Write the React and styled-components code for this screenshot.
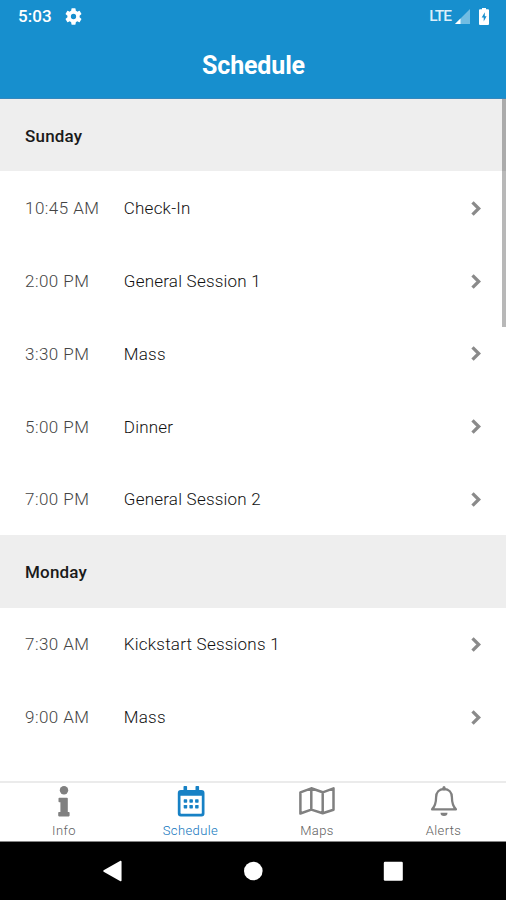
import React from "react";
import styled, { createGlobalStyle } from "styled-components";

const GlobalStyle = createGlobalStyle`
  * { box-sizing: border-box; }
  body { margin: 0; background: #fff; font-family: Roboto, sans-serif; }
  svg { display: block; flex: none; }
`;

const Screen = styled.div`
  width: 506px;
  height: 900px;
  display: flex;
  flex-direction: column;
  overflow: hidden;
  background: #fff;
`;

const Header = styled.header`
  height: 99px;
  flex: none;
  background: #178fce;
  border-bottom: 1px solid #3487bd;
  color: #fff;
`;

const StatusBar = styled.div`
  height: 32px;
  padding: 0 17px 0 18px;
  display: flex;
  align-items: center;
  justify-content: space-between;
`;

const StatusGroup = styled.div`
  display: flex;
  align-items: center;
  gap: ${(p) => p.$gap}px;
`;

const Clock = styled.span`
  font-size: 17px;
  line-height: 20px;
  font-weight: 500;
  letter-spacing: 0.1px;
`;

const Network = styled.span`
  font-size: 15.5px;
  line-height: 20px;
  font-weight: 500;
  letter-spacing: -1px;
  color: #dceffa;
`;

const Title = styled.h1`
  margin: 0;
  height: 67px;
  padding-left: 1px;
  text-align: center;
  font-size: 25px;
  line-height: 68px;
  font-weight: 700;
  letter-spacing: -0.15px;
`;

const Body = styled.main`
  position: relative;
  height: 682px;
  flex: none;
  overflow: hidden;
`;

const ScrollThumb = styled.div`
  position: absolute;
  top: 0;
  right: 0;
  width: 4.5px;
  height: 228px;
  background: rgba(0, 0, 0, 0.28);
`;

const DayHeading = styled.h2`
  margin: 0;
  height: 72.4px;
  padding-left: 25px;
  background: #eee;
  color: #1a1a1a;
  font-size: 17px;
  line-height: 74px;
  font-weight: 500;
  letter-spacing: 0.2px;
`;

const EventRow = styled.div`
  height: 72.75px;
  padding: 1px 25px 0 25px;
  display: grid;
  grid-template-columns: 98.8px 1fr auto;
  align-items: center;
  font-size: 17px;
  line-height: 22px;
  font-weight: 300;
`;

const Time = styled.span`
  color: #444;
  letter-spacing: 0.45px;
`;

const EventName = styled.span`
  color: #111;
  letter-spacing: 0.22px;
`;

const TabBar = styled.nav`
  height: 61px;
  flex: none;
  display: grid;
  grid-template-columns: repeat(4, 1fr);
  border-top: 2px solid #ebebeb;
  border-bottom: 1px solid #858585;
`;

const Tab = styled.div`
  display: flex;
  flex-direction: column;
  align-items: center;
  padding: 2px 0 0 1.5px;
  gap: 6px;
  color: ${(p) => (p.$active ? "#1781c5" : "#808080")};
`;

const TabLabel = styled.span`
  font-size: 13px;
  line-height: 16px;
  font-weight: 300;
  letter-spacing: 0.4px;
  color: ${(p) => (p.$active ? "#0f75bd" : "#606060")};
`;

const SystemNav = styled.footer`
  height: 58px;
  flex: none;
  padding-bottom: 1px;
  display: flex;
  align-items: center;
  justify-content: center;
  gap: 120px;
  background: #000;
`;

const GearIcon = () => (
  <svg width="17" height="17" viewBox="2 2 20 20">
    <path
      fill="#fff"
      d="M19.14 12.94c.04-.3.06-.61.06-.94 0-.32-.02-.64-.07-.94l2.03-1.58a.49.49 0 0 0 .12-.61l-1.92-3.32a.49.49 0 0 0-.59-.22l-2.39.96a7.03 7.03 0 0 0-1.62-.94l-.36-2.54A.48.48 0 0 0 13.92 2.4h-3.84a.47.47 0 0 0-.47.41l-.36 2.54c-.59.24-1.13.57-1.62.94l-2.39-.96a.47.47 0 0 0-.59.22L2.74 8.87a.47.47 0 0 0 .12.61l2.03 1.58a7 7 0 0 0-.02 1.88l-2.03 1.58a.49.49 0 0 0-.12.61l1.92 3.32c.12.22.37.29.59.22l2.39-.96c.5.38 1.03.7 1.62.94l.36 2.54c.05.24.24.41.48.41h3.84c.24 0 .44-.17.47-.41l.36-2.54a6.7 6.7 0 0 0 1.62-.94l2.39.96c.22.08.47 0 .59-.22l1.92-3.32a.47.47 0 0 0-.12-.61zM12 15.1a3.1 3.1 0 1 1 0-6.2 3.1 3.1 0 0 1 0 6.2z"
    />
  </svg>
);

const SignalIcon = () => (
  <svg width="15" height="15" viewBox="0 0 15 15">
    <path d="M15 0V15H0z" fill="#71bce2" />
    <path d="M5.5 9.5V15H0z" fill="#fff" />
  </svg>
);

const BatteryIcon = () => (
  <svg width="10" height="17" viewBox="0 0 10 17">
    <path d="M3 0h4v1.2h2a1 1 0 0 1 1 1V16a1 1 0 0 1-1 1H1a1 1 0 0 1-1-1V2.2a1 1 0 0 1 1-1h2z" fill="#fff" />
    <path d="M5.8 4.3 2.7 9.5h2v4.1l2.900-5.400H5.8z" fill="#178fce" />
  </svg>
);

const Chevron = () => (
  <svg width="10" height="15" viewBox="0 0 10 15">
    <path d="M1.5 1.4 7.7 7.5 1.5 13.6" fill="none" stroke="#8a8a8a" strokeWidth="3.3" />
  </svg>
);

const InfoIcon = () => (
  <svg width="36" height="32" viewBox="0 0 36 32">
    <g fill="currentColor">
      <circle cx="18" cy="5.3" r="4.2" />
      <path d="M13.3 12.7h7.7a.8.8 0 0 1 .8.8v13.400h1a.8.8 0 0 1 .8.8v2.900a.8.8 0 0 1-.8.8h-9.800a.8.8 0 0 1-.8-.8v-2.900a.8.8 0 0 1 .8-.8h1.400v-9.600h-1.100a.8.8 0 0 1-.8-.8v-3a.8.8 0 0 1 .8-.8z" />
    </g>
  </svg>
);

const CalendarIcon = () => (
  <svg width="36" height="32" viewBox="0 0 36 32">
    <g fill="currentColor">
      <path
        fillRule="evenodd"
        d="M10.5 1.7a.8.8 0 0 1 .8-.8h2a.8.8 0 0 1 .8.8v3.2h8.4V1.7a.8.8 0 0 1 .8-.8h2a.8.8 0 0 1 .8.8v3.2h2.4a3 3 0 0 1 3 3v20.6a3 3 0 0 1-3 3H7.8a3 3 0 0 1-3-3V7.9a3 3 0 0 1 3-3h2.7zM7.5 10.8v17.3c0 .5.2.7.7.7h19.9c.5 0 .7-.2.7-.7V10.8z"
      />
      {[14.2, 19.9].map((y) =>
        [10.7, 16.4, 22.1].map((x) => <rect key={`${x}-${y}`} x={x} y={y} width="3.5" height="3.6" rx="0.7" />)
      )}
    </g>
  </svg>
);

const MapIcon = () => (
  <svg width="36" height="32" viewBox="0 0 36 32">
    <path
      d="M1.4 7.3 12.3 3.3 23.7 7.3 34.5 3.3V24.700L23.7 28.300 12.3 24.600 1.4 28.500zM12.3 3.3V24.6M23.7 7.3V28.3"
      fill="none"
      stroke="currentColor"
      strokeWidth="2.5"
      strokeLinejoin="round"
    />
  </svg>
);

const BellIcon = () => (
  <svg width="36" height="32" viewBox="0 0 36 32">
    <path d="M18 2.4v1.500" stroke="currentColor" strokeWidth="3" strokeLinecap="round" />
    <path
      d="M18 4c-4.800 0-7.900 3.500-7.900 8.300 0 6.600-1.700 9.600-4 12.100h23.800c-2.300-2.500-4-5.500-4-12.100 0-4.800-3.100-8.300-7.900-8.300z"
      fill="none"
      stroke="currentColor"
      strokeWidth="2.3"
      strokeLinejoin="round"
    />
    <path d="M14.500 27.800h7a3.500 3.300 0 0 1-7 0z" fill="currentColor" />
  </svg>
);

const BackIcon = () => (
  <svg width="20" height="22" viewBox="0 0 20 22">
    <path d="M1 11 17.800 1.500V20.500z" fill="#fff" stroke="#fff" strokeWidth="1.5" strokeLinejoin="round" />
  </svg>
);

const HomeIcon = () => (
  <svg width="20" height="20" viewBox="0 0 20 20">
    <circle cx="10.300" cy="10" r="9.300" fill="#fff" />
  </svg>
);

const RecentsIcon = () => (
  <svg width="20" height="20" viewBox="0 0 20 20">
    <rect x="0.800" y="0.800" width="19" height="19" rx="1.200" fill="#fff" />
  </svg>
);

const DAYS = [
  {
    name: "Sunday",
    events: [
      ["10:45 AM", "Check-In"],
      ["2:00 PM", "General Session 1"],
      ["3:30 PM", "Mass"],
      ["5:00 PM", "Dinner"],
      ["7:00 PM", "General Session 2"],
    ],
  },
  {
    name: "Monday",
    events: [
      ["7:30 AM", "Kickstart Sessions 1"],
      ["9:00 AM", "Mass"],
    ],
  },
];

const TABS = [
  { label: "Info", Icon: InfoIcon },
  { label: "Schedule", Icon: CalendarIcon, active: true },
  { label: "Maps", Icon: MapIcon },
  { label: "Alerts", Icon: BellIcon },
];

export default function App() {
  return (
    <>
      <GlobalStyle />
      <Screen>
        <Header>
          <StatusBar>
            <StatusGroup $gap={13}>
              <Clock>5:03</Clock>
              <GearIcon />
            </StatusGroup>
            <StatusGroup $gap={9}>
              <StatusGroup $gap={4}>
                <Network>LTE</Network>
                <SignalIcon />
              </StatusGroup>
              <BatteryIcon />
            </StatusGroup>
          </StatusBar>
          <Title>Schedule</Title>
        </Header>
        <Body>
          {DAYS.map((day) => (
            <section key={day.name}>
              <DayHeading>{day.name}</DayHeading>
              {day.events.map(([time, name]) => (
                <EventRow key={time}>
                  <Time>{time}</Time>
                  <EventName>{name}</EventName>
                  <Chevron />
                </EventRow>
              ))}
            </section>
          ))}
          <ScrollThumb />
        </Body>
        <TabBar>
          {TABS.map(({ label, Icon, active }) => (
            <Tab key={label} $active={active}>
              <Icon />
              <TabLabel $active={active}>{label}</TabLabel>
            </Tab>
          ))}
        </TabBar>
        <SystemNav>
          <BackIcon />
          <HomeIcon />
          <RecentsIcon />
        </SystemNav>
      </Screen>
    </>
  );
}
